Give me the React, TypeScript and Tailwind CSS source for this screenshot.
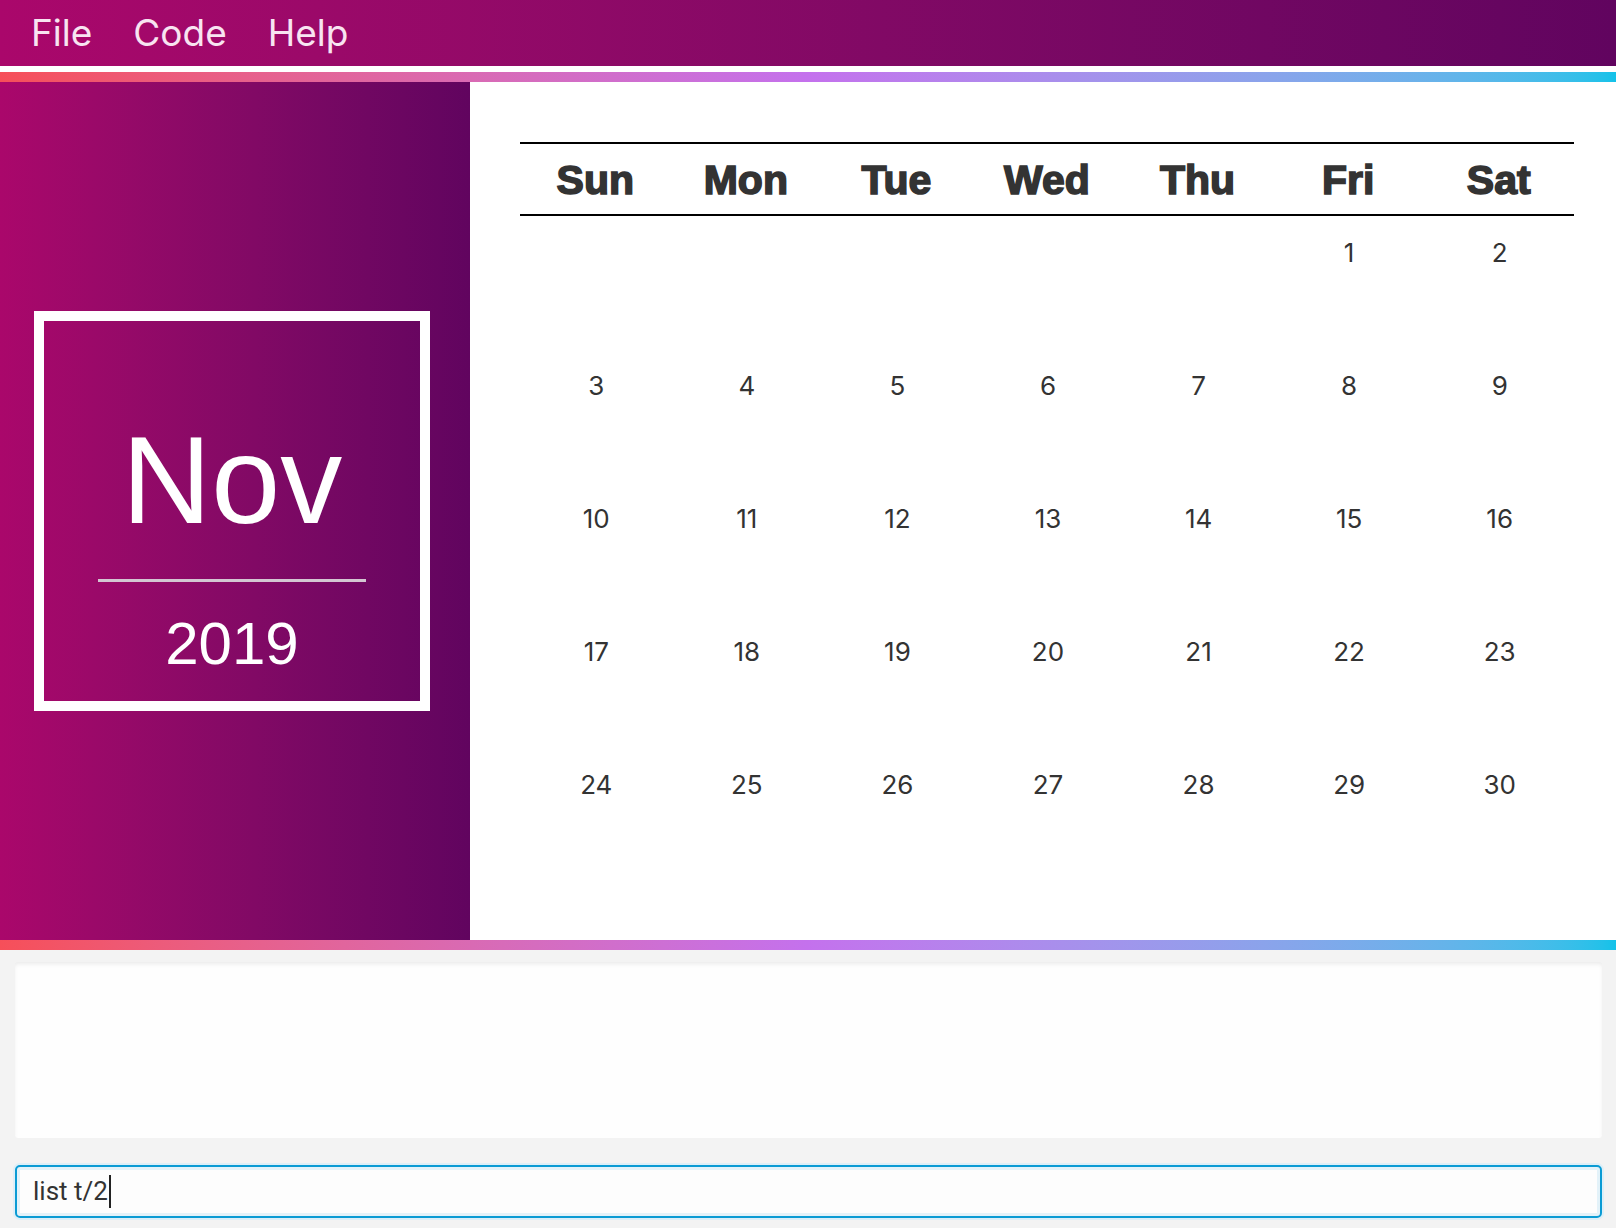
import React from "react";

const weekDays = ["Sun", "Mon", "Tue", "Wed", "Thu", "Fri", "Sat"];

// Nov 2019 starts on a Friday
function buildWeeks(): (number | null)[][] {
  const cells: (number | null)[] = [null, null, null, null, null];
  for (let d = 1; d <= 30; d++) cells.push(d);
  while (cells.length % 7 !== 0) cells.push(null);
  const weeks: (number | null)[][] = [];
  for (let i = 0; i < cells.length; i += 7) weeks.push(cells.slice(i, i + 7));
  return weeks;
}

function MenuBar() {
  return (
    <div className="h-[66px] bg-linear-to-r from-[#aa076b] to-[#61045f] flex items-center pl-[31px] gap-[41px] text-[37px] text-[#f8e4f1] font-['Inter',sans-serif]">
      <span>File</span>
      <span>Code</span>
      <span>Help</span>
    </div>
  );
}

function GradientStrip() {
  return <div className="h-[10px] bg-linear-to-r from-[#f64f59] via-[#c471ed] to-[#12c2e9]" />;
}

function MonthPanel() {
  return (
    <div className="w-[470px] bg-linear-to-r from-[#aa076b] to-[#61045f] flex items-center">
      <div className="ml-[34px] w-[396px] h-[400px] border-[10px] border-white flex flex-col items-center pt-[97px] text-white font-['Liberation_Sans',Arial,sans-serif]">
        <div className="text-[124px] leading-none">Nov</div>
        <div className="mt-[37px] w-[268px] h-[3px] bg-[#d3c6d2]" />
        <div className="mt-[32px] text-[60px] leading-none">2019</div>
      </div>
    </div>
  );
}

function CalendarView() {
  const weeks = buildWeeks();
  return (
    <div className="flex-1 bg-white pl-[50px] pr-[42px] pt-[60px]">
      <div className="grid grid-cols-7 h-[74px] border-y-2 border-black items-center pt-[3px]">
        {weekDays.map((d) => (
          <div
            key={d}
            className="text-center text-[41px] font-bold text-[#333] font-['Liberation_Sans',Arial,sans-serif] [-webkit-text-stroke:1.6px_#333]"
          >
            {d}
          </div>
        ))}
      </div>
      {weeks.map((week, wi) => (
        <div key={wi} className="grid grid-cols-7 h-[133px]">
          {week.map((day, di) => (
            <div
              key={di}
              className="text-center pt-[22px] pl-[2px] text-[26px] leading-[30px] text-[#333] font-['Inter',sans-serif]"
            >
              {day ?? ""}
            </div>
          ))}
        </div>
      ))}
    </div>
  );
}

function BottomArea() {
  return (
    <div className="flex-1 bg-[#f3f3f3] flex flex-col pl-[15px] pr-[14px]">
      <div className="mt-[12px] h-[176px] bg-[#fefefe] rounded-[3px] shadow-[inset_0_3px_4px_-1px_rgba(0,0,0,0.08)]" />
      <div className="mt-[27px] h-[53px] bg-[#fdfdfd] rounded-[5px] border-2 border-[#0a9bd4] shadow-[0_0_0_2px_#dceff8,inset_0_0_0_3px_#e3f2f9] flex items-center pl-[16px] text-[26px] text-[#333] font-['Roboto',sans-serif]">
        <span>list t/2</span>
        <span className="w-[2px] h-[33px] bg-[#222] ml-[1px]" />
      </div>
    </div>
  );
}

export default function App() {
  return (
    <div className="w-[1616px] h-[1228px] flex flex-col bg-white overflow-hidden">
      <MenuBar />
      <div className="h-[6px] bg-white" />
      <GradientStrip />
      <div className="h-[858px] flex">
        <MonthPanel />
        <CalendarView />
      </div>
      <GradientStrip />
      <BottomArea />
    </div>
  );
}
